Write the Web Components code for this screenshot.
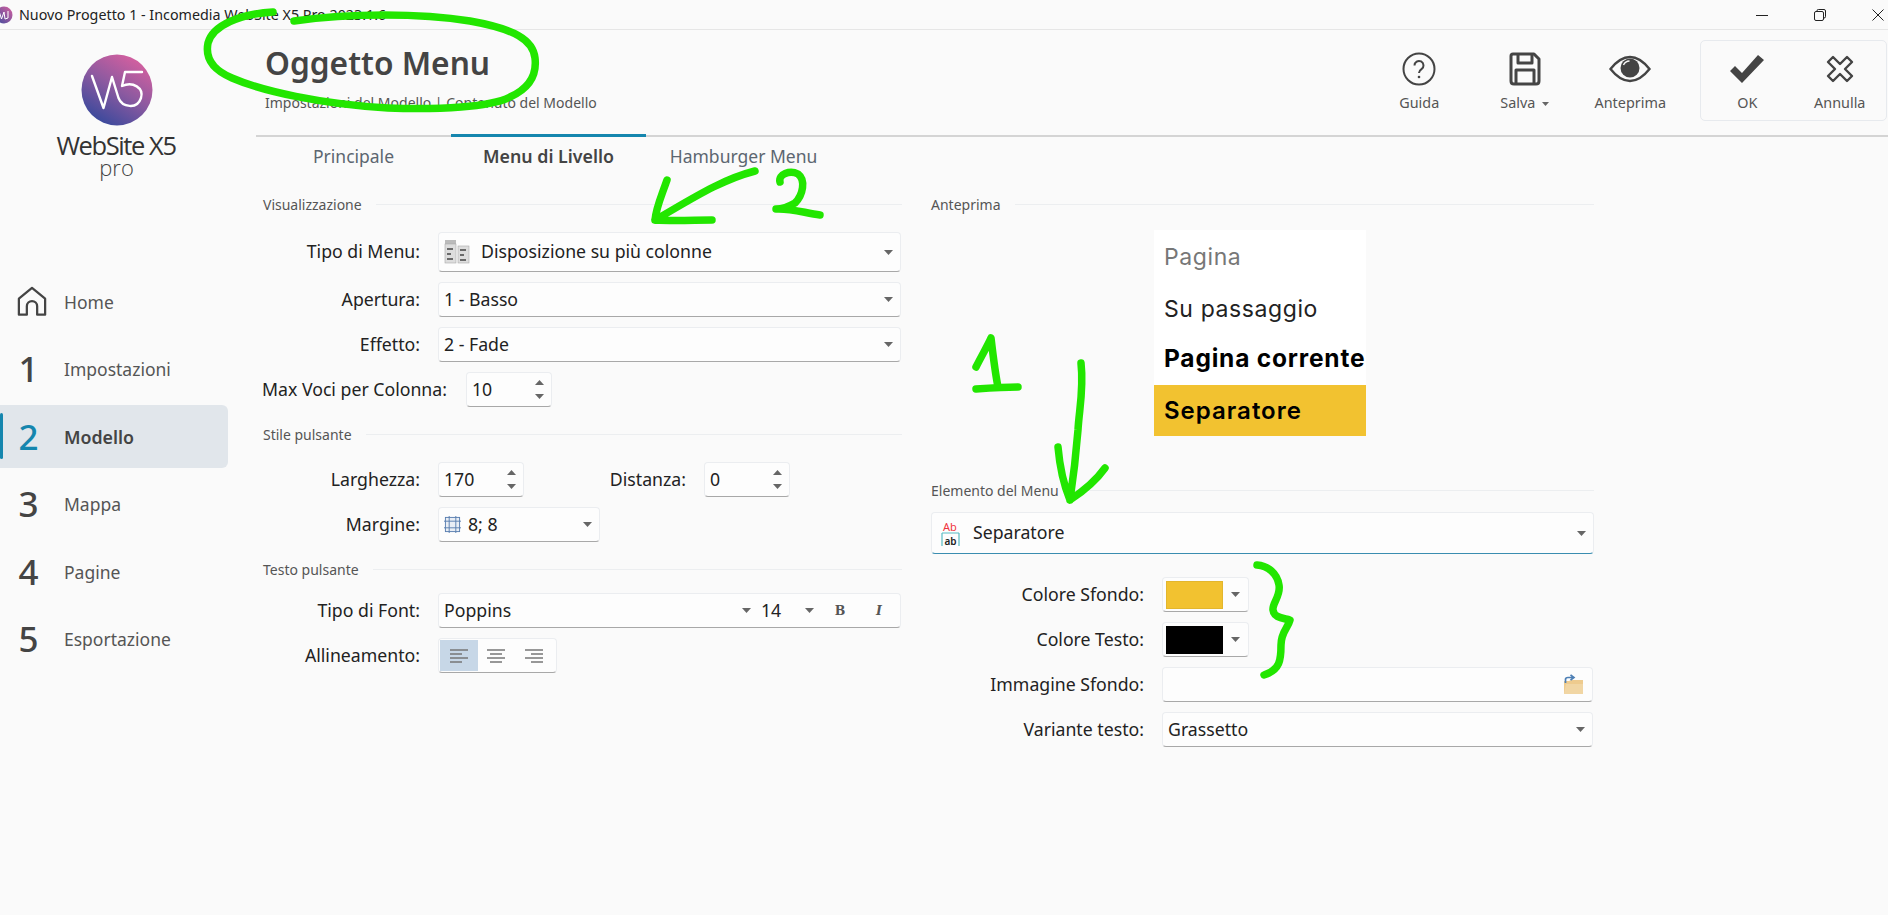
<!DOCTYPE html>
<html lang="it"><head><meta charset="utf-8"><title>WebSite X5</title>
<style>
html,body{margin:0;padding:0;width:1888px;height:915px;background:#fafafa}
body{font-family:"Noto Sans","Open Sans",sans-serif;color:#222;position:relative;overflow:hidden}
</style></head><body>
<x-titlebar>Nuovo Progetto 1 - Incomedia WebSite X5 Pro 2023.1.6</x-titlebar>
<x-app>
  <x-sidebar>
    <x-nav-item><svg slot="mark" width="30" height="31" viewBox="0 0 32 32" fill="none" stroke="#444" stroke-width="2.400" stroke-linejoin="round"><path d="M2 30V13L16 1.500 30 13V30H21.500V21a5.500 5.500 0 0 0-11 0v9Z"/></svg>Home</x-nav-item>
    <x-nav-item num="1">Impostazioni</x-nav-item>
    <x-nav-item num="2" active>Modello</x-nav-item>
    <x-nav-item num="3">Mappa</x-nav-item>
    <x-nav-item num="4">Pagine</x-nav-item>
    <x-nav-item num="5">Esportazione</x-nav-item>
  </x-sidebar>
  <x-main>
    <x-header heading="Oggetto Menu" sub="Impostazioni del Modello | Contenuto del Modello"></x-header>
    <x-tabs></x-tabs>
    <x-columns>
      <x-col slot="left">
        <x-section first>Visualizzazione</x-section>
        <x-field label="Tipo di Menu:" tall><x-select tall wide><svg slot="icon" width="26" height="26" viewBox="0 0 26 26"><rect x="1" y="1" width="11" height="6" fill="#bbb"/><rect x="1" y="5" width="11" height="19" fill="#ddd" stroke="#aaa" stroke-width=".6"/><rect x="14" y="7" width="11" height="17" fill="#ddd" stroke="#aaa" stroke-width=".6"/><path d="M3 10h6M3 15h4M3 20h6M16 11h6M16 16h4M16 21h6" stroke="#444" stroke-width="1.400"/></svg>Disposizione su più colonne</x-select></x-field>
        <x-field label="Apertura:"><x-select wide>1 - Basso</x-select></x-field>
        <x-field label="Effetto:"><x-select wide>2 - Fade</x-select></x-field>
        <x-field label="Max Voci per Colonna:" compact><x-spin>10</x-spin></x-field>
        <x-section>Stile pulsante</x-section>
        <x-field label="Larghezza:" tight><x-spin>170</x-spin><x-inline-label>Distanza:</x-inline-label><x-spin>0</x-spin></x-field>
        <x-field label="Margine:"><x-select style="width:162px"><svg slot="icon" width="17" height="19" viewBox="0 0 18 20" fill="none" stroke="#5a7fb0" stroke-width="1"><rect x="1.500" y="2.500" width="15" height="15" fill="#e9eef5"/><path d="M5.500 1v18M12.500 1v18M0 6.500h18M0 13.500h18"/></svg>8; 8</x-select></x-field>
        <x-section>Testo pulsante</x-section>
        <x-field label="Tipo di Font:" tighter><x-fontbar></x-fontbar></x-field>
        <x-field label="Allineamento:"><x-align></x-align></x-field>
      </x-col>
      <x-col slot="right">
        <x-section first>Anteprima</x-section>
        <x-preview></x-preview>
        <x-section elem>Elemento del Menu</x-section>
        <x-select focus style="width:663px;margin:12px 0 0 1px"><svg slot="icon" width="22" height="26" viewBox="0 0 22 26"><text x="3" y="10" font-family="Noto Sans,sans-serif" font-size="11" fill="#f0343c">Ab</text><path d="M2 12h17M2 12v13M19 12v13" fill="none" stroke="#59bcc4" stroke-width="1.200"/><text x="4.500" y="24" font-family="Noto Sans,sans-serif" font-size="10" font-weight="600" fill="#222">ab</text></svg>Separatore</x-select>
        <x-field wide-label label="Colore Sfondo:" first><x-swatch color="#f2c230"></x-swatch></x-field>
        <x-field wide-label label="Colore Testo:"><x-swatch color="#000"></x-swatch></x-field>
        <x-field wide-label label="Immagine Sfondo:"><x-file></x-file></x-field>
        <x-field wide-label label="Variante testo:"><x-select style="width:431px">Grassetto</x-select></x-field>
      </x-col>
    </x-columns>
  </x-main>
</x-app>
<x-annotations></x-annotations>
<script>
function def(name,css,html){
  customElements.define(name,class extends HTMLElement{
    connectedCallback(){
      if(this.shadowRoot)return;
      const r=this.attachShadow({mode:'open'});
      const a=n=>this.getAttribute(n);
      r.innerHTML='<style>'+css+'</style>'+(typeof html==='function'?html(a,this):html);
    }
  });
}
const FS='17.700px';
const caret='<svg width="9" height="5" viewBox="0 0 10 6" preserveAspectRatio="none"><path d="M0 0h10L5 6Z" fill="#666"/></svg>';

def('x-titlebar',`:host{display:flex;align-items:center;height:29px;border-bottom:1px solid #e6e6e6;background:#fafafa;font-size:14.300px;color:#222;white-space:nowrap}
 .i{margin-left:-5px;margin-right:6px;flex:none}
 .t{flex:1}
 .w{display:flex;gap:46px;padding-right:4px;align-items:center}`,
 `<svg class="i" width="18" height="18" viewBox="0 0 18 18"><defs><linearGradient id="g" x1="1" y1="0" x2="0" y2="1"><stop offset="0" stop-color="#d8609f"/><stop offset="1" stop-color="#3c4c9e"/></linearGradient></defs><circle cx="9" cy="9" r="8.500" fill="url(#g)"/><path d="M4 5l2.500 8L9 6l1 7 3-1V5" fill="none" stroke="#fff" stroke-width="1"/></svg>
 <span class="t"><slot></slot></span>
 <span class="w"><svg width="12" height="12" viewBox="0 0 12 12"><path d="M0 6.500h12" stroke="#222"/></svg>
 <svg width="12" height="12" viewBox="0 0 12 12" fill="none" stroke="#222"><rect x=".5" y="2.500" width="9" height="9" rx="1.500"/><path d="M3 2.500V1.800Q3 .5 4.300 .5H10Q11.500 .5 11.500 2V7.700Q11.500 9 10 9"/></svg>
 <svg width="12" height="12" viewBox="0 0 12 12"><path d="M.5 .5l11 11M11.500 .5l-11 11" stroke="#222" fill="none"/></svg></span>`);

def('x-app',`:host{display:flex;height:885px}`,`<slot></slot>`);

def('x-sidebar',`:host{display:block;width:228px;flex:none}
 .logo{height:238px;box-sizing:border-box;padding-top:24px;display:flex;flex-direction:column;align-items:center}
 .logo svg{display:block;margin-left:5px}
 .n{font:500 25.500px/24px "Open Sans",sans-serif;color:#333;letter-spacing:-1.400px;margin:7px 0 0 4px;white-space:nowrap}
 .p{font:300 22px/20px "Open Sans",sans-serif;color:#444;margin:0 0 0 5px}`,
 `<div class="logo"><svg width="72" height="72" viewBox="0 0 72 72"><defs><linearGradient id="lg" x1=".85" y1="0" x2=".25" y2="1"><stop offset="0" stop-color="#e0609f"/><stop offset=".5" stop-color="#8e5aa0"/><stop offset="1" stop-color="#34489c"/></linearGradient></defs><circle cx="36" cy="36" r="35.500" fill="url(#lg)"/><path d="M11 22L22.500 54 31 23 37.500 44C41 53 56 56 60 44 63 34 52 27 41 32L44 18H61" fill="none" stroke="#fff" stroke-width="2.400" stroke-linejoin="round" stroke-linecap="round"/></svg>
 <div class="n">WebSite X5</div><div class="p">pro</div></div><slot></slot>`);

def('x-nav-item',`:host{display:block;height:67.500px;box-sizing:border-box;padding:2.250px 0}
 .r{height:63px;display:flex;align-items:center;position:relative;border-radius:0 6px 6px 0}
 :host([active]) .r{background:#e1e6eb}
 :host([active]) .r::before{content:"";position:absolute;left:0;top:8px;bottom:9px;width:2.500px;background:#1586ae;border-radius:2px}
 .m{width:64px;flex:none;display:flex;justify-content:center;padding-right:1px;box-sizing:border-box;font-size:35px;line-height:40px;color:#444;font-weight:500}
 :host([num]) .m{padding-right:7px}
 :host([active]) .m{color:#1586ae}
 .l{font-size:17.500px;color:#555}
 :host([active]) .l{color:#444;font-weight:600;font-size:17.800px}`,
 a=>`<div class="r"><div class="m">${a('num')||''}<slot name="mark"></slot></div><div class="l"><slot></slot></div></div>`);

def('x-main',`:host{display:block;flex:1;margin-left:28px;min-width:0}`,`<slot></slot>`);

const tool=(svg,label,c)=>`<div class="tool">${svg}<div class="lb">${label}${c?' <span class="c">'+caret+'</span>':''}</div></div>`;
def('x-header',`:host{display:flex;height:105px;justify-content:space-between}
 .h{padding:12px 0 0 9px}
 h1{margin:0;font-size:31.700px;line-height:42px;font-weight:600;color:#444}
 .s{font-size:14px;line-height:20px;color:#555;margin-top:9px}
 .bar{display:flex;align-items:flex-start;padding-top:10px;margin-right:1px}
 .tool{width:105.500px;height:81px;box-sizing:border-box;padding-top:12px;display:flex;flex-direction:column;align-items:center;font-size:14.400px;color:#555}
 .tool svg.ic{display:block;height:34px}
 .lb{margin-top:7px;line-height:20px;white-space:nowrap}
 .c svg{vertical-align:middle;margin-left:3px;width:7px;height:4px}
 .grp{display:flex;height:81px;box-sizing:border-box;margin-left:17px;border:1px solid #e7eaee;border-radius:5px}
 .grp .tool{width:92.500px;padding-top:11px}`,
 a=>`<div class="h"><h1>${a('heading')}</h1><div class="s">${a('sub')}</div></div>
 <div class="bar">
 ${tool('<svg class="ic" width="34" height="34" viewBox="0 0 34 34" fill="none" stroke="#444"><circle cx="17" cy="17" r="15.500" stroke-width="2"/><path d="M12.500 13.500a4.500 4.500 0 1 1 7 3.700c-1.600 1.100-2.500 2-2.500 3.800" stroke-width="2"/><circle cx="17" cy="25" r="1.300" fill="#444" stroke="none"/></svg>','Guida')}
 ${tool('<svg class="ic" width="32" height="34" viewBox="0 0 32 34" fill="none" stroke="#444" stroke-width="3" stroke-linejoin="round"><path d="M4 2H25L30 7V29Q30 32 27 32H5Q2 32 2 29V4Q2 2 4 2Z"/><path d="M9 2V11H23V2M7 32V18H25V32"/></svg>','Salva',1)}
 ${tool('<svg class="ic" width="42" height="34" viewBox="0 0 42 30" fill="none" stroke="#444" stroke-width="2.400"><path d="M1.500 15Q11 3 21 3T40.500 15Q31 27 21 27T1.500 15Z"/><circle cx="21" cy="14" r="9.500" fill="#444" stroke="none"/><path d="M14.500 11a7 7 0 0 1 6-4" stroke="#fafafa" stroke-width="1.400"/></svg>','Anteprima')}
 <div class="grp">
 ${tool('<svg class="ic" width="36" height="34" viewBox="0 0 36 30"><path d="M1 17l5-5 7 7L29 1l6 5L13 29Z" fill="#444"/></svg>','OK')}
 ${tool('<svg class="ic" width="28" height="34" viewBox="0 0 28 28" fill="#fafafa" stroke="#444" stroke-width="2.400" stroke-linejoin="round"><path d="M7 2L14 9 21 2 26 7 19 14 26 21 21 26 14 19 7 26 2 21 9 14 2 7Z"/></svg>','Annulla')}
 </div></div>`);

def('x-tabs',`:host{display:flex;border-top:2px solid #d4d4d4;height:40px;font-size:17.500px}
 div{width:195px;text-align:center;line-height:38px;color:#5c6670;position:relative;white-space:nowrap}
 .a{color:#444;font-weight:600;font-size:17.800px}
 .a::before{content:"";position:absolute;left:0;right:0;top:-3px;height:3px;background:#1586ae}`,
 `<div>Principale</div><div class="a">Menu di Livello</div><div>Hamburger Menu</div>`);

def('x-columns',`:host{display:flex;padding:17px 0 0 6px}
 .l{width:640px;margin-right:28px}.r{width:664px}`,
 `<div class="l"><slot name="left"></slot></div><div class="r"><slot name="right"></slot></div>`);
def('x-col',`:host{display:block}`,`<slot></slot>`);

def('x-section',`:host{display:flex;align-items:center;gap:14px;height:20px;margin-top:17px;font-size:14px;color:#555;white-space:nowrap}
 :host([first]){margin-top:0}
 :host([elem]){margin-top:44px}
 span{line-height:20px;padding:1px 0 0 1px}
 i{flex:1;height:1px;background:#eceef0}`,`<span><slot></slot></span><i></i>`);

def('x-field',`:host{display:flex;align-items:center;margin-top:10px;height:35px}
 :host([tall]){height:40px;margin-top:18px}
 :host([tight]){margin-top:18px}
 :host([tighter]){margin-top:14px}
 :host([first]){margin-top:23px}
 .lb{width:158px;margin-right:18px;flex:none;text-align:right;font-size:${FS};color:#222;white-space:nowrap;padding-bottom:2px}
 :host([compact]) .lb{width:auto;margin-right:19px}
 :host([wide-label]) .lb{width:214px;margin-right:18px}
 ::slotted(x-spin){flex:none}`,a=>`<div class="lb">${a('label')}</div><slot></slot>`);

const boxCss=`box-sizing:border-box;background:#fdfdfd;border:1px solid #ebedf0;border-bottom:1px solid #a8a8a8;border-radius:4px;`;
def('x-select',`:host{display:flex;align-items:center;${boxCss}height:35px;padding:0 7px 0 5px;font-size:${FS};color:#222;white-space:nowrap}
 :host([tall]){height:40px}
 :host([wide]){width:463px}
 :host([focus]){height:42px;border-bottom:1.500px solid #3a8db0;padding-left:8px}
 .t{flex:1;display:flex;align-items:center;padding-bottom:2px}
 ::slotted(svg){margin-right:7px;flex:none;margin-top:2px}
 :host([tall]) ::slotted(svg){margin-right:11px}
 :host([focus]) ::slotted(svg){margin-right:11px;margin-top:4px}`,
 `<div class="t"><slot name="icon"></slot><slot></slot></div>${caret}`);

def('x-spin',`:host{display:flex;align-items:center;justify-content:space-between;${boxCss}width:86px;height:35px;padding:0 7px 0 5px;font-size:${FS};color:#222}
 span{padding-bottom:2px}
 .a{display:flex;flex-direction:column;gap:9px;padding:0}
 .a svg{display:block}`,
 `<span><slot></slot></span><span class="a"><svg width="9" height="5" viewBox="0 0 10 6" preserveAspectRatio="none"><path d="M0 6h10L5 0Z" fill="#666"/></svg>${caret}</span>`);

def('x-inline-label',`:host{display:block;width:162px;margin-right:18px;text-align:right;font-size:${FS};color:#222;padding-bottom:2px}`,`<slot></slot>`);

def('x-fontbar',`:host{display:flex;align-items:center;${boxCss}width:463px;height:35px;padding-left:5px;font-size:${FS};color:#222}
 .f,.n{padding-bottom:2px}
 .f{width:298px}.n{margin-left:10px;width:44px}
 .b{width:40px;text-align:center;font:700 12.500px "DejaVu Serif",serif;color:#555}
 .i{width:38px;text-align:center;font:italic 700 12.500px "DejaVu Serif",serif;color:#555}
 .b1{margin-left:6px}`,
 `<span class="f">Poppins</span>${caret}<span class="n">14</span>${caret}<span class="b b1">B</span><span class="i">I</span>`);

const lines=(w)=>`<svg width="20" height="16" viewBox="0 0 20 16" stroke="#777" stroke-width="1.300"><path d="${w}"/></svg>`;
def('x-align',`:host{display:flex;align-items:stretch;${boxCss}width:119px;height:35px;padding:1px}
 div{width:37.500px;display:flex;align-items:center;justify-content:center}
 .a{background:#c7d7e7}`,
 `<div class="a">${lines('M1 2h18M1 6h12M1 10h18M1 14h12')}</div><div>${lines('M1 2h18M4 6h12M1 10h18M4 14h12')}</div><div>${lines('M1 2h18M7 6h12M1 10h18M7 14h12')}</div>`);

def('x-swatch',`:host{display:flex;align-items:center;${boxCss}width:87px;height:35px;padding:2px 8px 2px 3px;justify-content:space-between}
 i{display:block;width:57px;height:28px;border:1px solid rgba(0,0,0,.06);box-sizing:border-box}`,
 a=>`<i style="background:${a('color')}"></i>${caret}`);

def('x-file',`:host{display:flex;align-items:center;justify-content:flex-end;${boxCss}width:431px;height:35px;padding-right:8px}`,
 `<svg width="21" height="21" viewBox="0 0 21 21"><path d="M1 7h5l2-1h12v14H1Z" fill="#eecb8e"/><path d="M1 20L3 10H20V20Z" fill="#f1d6a4"/><path d="M2.500 9V5.500Q2.500 3.500 5 3.500H10M7.500 .8l3.500 2.700-3.500 2.700" stroke="#4d7fb5" stroke-width="1.700" fill="none"/></svg>`);

def('x-preview',`:host{display:block;width:212px;height:206px;margin:16px 0 0 224px;background:#fff;font-family:Inter,sans-serif;font-size:23px;letter-spacing:.6px;white-space:nowrap}
 div{height:51.500px;line-height:51px;padding-left:10px}
 .p{color:#777;line-height:55px}.h{color:#222;line-height:54px}.c{color:#000;font-weight:700;font-size:24.500px;letter-spacing:.8px}.s{color:#000;font-weight:600;background:#f2c230;font-size:24px;letter-spacing:1px}`,
 `<div class="p">Pagina</div><div class="h">Su passaggio</div><div class="c">Pagina corrente</div><div class="s">Separatore</div>`);

def('x-annotations',`:host{position:absolute;left:0;top:0;width:1888px;height:915px;pointer-events:none}
 svg{display:block}
 path{fill:none;stroke:#22e600;stroke-width:7.500;stroke-linecap:round;stroke-linejoin:round}`,
 `<svg width="1888" height="915" viewBox="0 0 1888 915">
 <path d="M273 12C240 14 213 25 208 43 205 58 213 70 232 78 262 91 320 104 388 108 440 110 490 107 510 97 530 88 537 75 535 58 533 40 515 29 470 21 420 13 350 13 294 21"/>
 <path d="M755 171C720 180 690 200 655 220M667 180C660 200 656 208 655 220 675 221 695 220 712 220"/>
 <path d="M780 182C778 174 790 170 798 174 806 180 803 195 795 203 788 207 780 209 776 209 790 208 805 213 820 215"/>
 <path d="M976 367C982 355 988 345 991 338 993 355 995 372 998 387M976 389C990 388 1005 387 1018 387"/>
 <path d="M1081 363C1084 390 1079 410 1078 430 1076 455 1073 480 1070 500M1058 447C1060 470 1065 488 1070 500 1082 492 1095 482 1105 468"/>
 <path d="M1257 565C1268 566 1277 573 1279 585 1281 596 1272 603 1273 610 1274 618 1283 618 1290 620 1288 628 1281 632 1281 645 1281 660 1280 670 1264 675"/>
 </svg>`);
</script>
</body></html>
